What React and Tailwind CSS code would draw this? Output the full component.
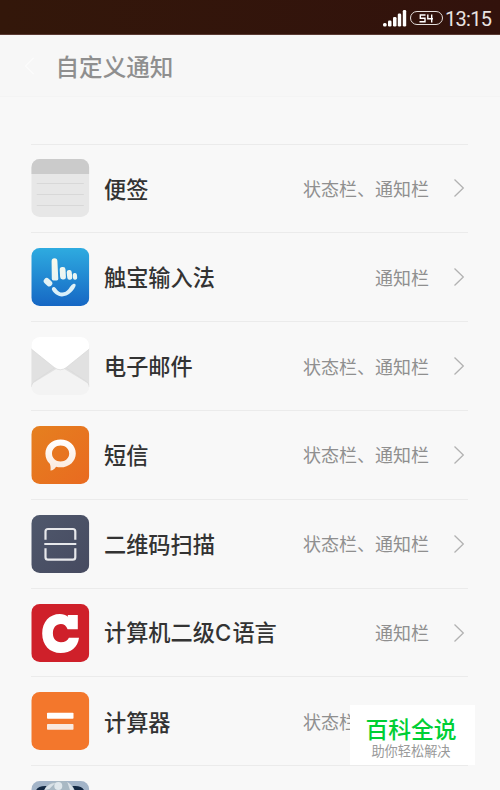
import React from "react";

const both = "状态栏、通知栏";
const single = "通知栏";

function NotesIcon() {
  return (
    <g>
      <rect width="58" height="58" fill="#e7e7e7" />
      <rect width="58" height="15" fill="#cbcbcb" />
      <path d="M5.5 24.5h47M5.5 35.5h47M5.5 46.5h47" stroke="#d8d8d8" strokeWidth="1" />
    </g>
  );
}

function TouchPalIcon() {
  return (
    <g>
      <rect width="58" height="58" fill="url(#touch)" />
      <g fill="url(#finger)">
        <path d="M20.3 13.2a2.9 2.9 0 0 1 5.8 0l.9 17.5a1.6 1.6 0 0 1-1.6 1.7h-3.3a1.6 1.6 0 0 1-1.6-1.6z" />
        <rect x="28.6" y="19" width="5.8" height="12.6" rx="2.6" transform="rotate(-3 31 25)" />
        <rect x="35.7" y="22" width="5" height="9.8" rx="2.3" transform="rotate(-6 38 27)" />
        <rect x="41.5" y="25" width="4.2" height="6.8" rx="2" transform="rotate(-6 43.5 28)" />
        <rect x="12" y="31.2" width="9.4" height="6" rx="2.9" transform="rotate(42 16.7 34.2)" />
        <path d="M20.7 40.2c1-2 3-1.200 4.200.5 3.500 5.300 8.600 5 12.400.3 1.500-1.900 2.200-4 4.500-5 2-.8 3.200.4 2.200 2.600-2.500 5.100-7.100 9.800-13.300 9.800-4.800 0-8.300-3.300-9.900-6.300-.3-.7-.4-1.300-.1-1.900z" />
      </g>
    </g>
  );
}

function MailIcon() {
  return (
    <g>
      <rect width="58" height="58" fill="#f3f3f3" />
      <path d="M0 11L25 32 2 46Q0 48 0 52zM58 11L33 32 56 46Q58 48 58 52z" fill="#e1e1e1" />
      <path d="M0 0h58v12L35 30.500Q29 35 23 30.500L0 12z" fill="#ffffff" />
      <path d="M0 12L23 30.500Q29 35 35 30.500L58 12" fill="none" stroke="#d7d7d7" strokeWidth=".7" />
      <path d="M0 50Q0 46 3 44.500L23 31M58 50Q58 46 55 44.500L35 31" fill="none" stroke="#d9d9d9" strokeWidth=".6" />
    </g>
  );
}

function MessageIcon() {
  return (
    <g>
      <rect width="58" height="58" fill="url(#message)" />
      <path
        fillRule="evenodd"
        fill="url(#finger2)"
        d="M29.300 13.500c8.500 0 15.200 6 15.200 13.900s-6.700 13.900-15.200 13.900c-1.600 0-3.200-.2-4.600-.6-1.100 2-3 3.500-5.300 3.900-.3-.1-.3-.4-.2-.7.300-2.200 0-4.200-.7-6.100-2.800-2.600-4.400-6.200-4.400-10.400 0-7.900 6.700-14 15.200-14zm0 5.900c-4.800 0-8.600 3.500-8.600 8s3.800 8 8.600 8 8.600-3.500 8.600-8-3.800-8-8.600-8z"
      />
    </g>
  );
}

function ScanIcon() {
  return (
    <g>
      <rect width="58" height="58" fill="url(#scan)" />
      <path
        d="M14.200 24.800V16.500q0-2.500 2.500-2.500h24.800q2.500 0 2.500 2.500v8.300M14.200 33.200v9q0 2.500 2.500 2.500h24.800q2.500 0 2.500-2.500v-9M13 29h32"
        fill="none"
        stroke="#e7e8eb"
        strokeWidth="2.200"
      />
    </g>
  );
}

function CLanguageIcon() {
  return (
    <g>
      <rect width="58" height="58" fill="#cf202a" />
      <path
        d="M46.500 11v14.300H36.300C35 21.600 32.700 19.900 29.600 19.900c-5 0-8 3.800-8 9.300 0 5.300 3.100 9 8 9 4.200 0 7-1.800 8-4.500h10.100C46.500 43.300 39.600 49 29.300 49 18.500 49 10.900 41.200 10.900 29.500S18.300 10 28.500 10c3.500 0 6 .9 8 2.800V11z"
        fill="#fff"
      />
    </g>
  );
}

function CalculatorIcon() {
  return (
    <g>
      <rect width="58" height="58" fill="#f3772c" />
      <rect x="15.700" y="20.800" width="26.500" height="5.900" rx=".8" fill="#fff" />
      <rect x="15.700" y="31.900" width="26.500" height="5.900" rx=".8" fill="#f9e9e0" />
    </g>
  );
}

function RobotIcon() {
  return (
    <g>
      <rect width="58" height="58" fill="#a3b4c8" />
      <path d="M4 13Q4 5 14 5h30Q53 5 54 13v20H4z" fill="#142943" />
      <path d="M12 14C13 4 19 0 27 0h6c7 1 10 7 12 14z" fill="#a9b9c4" />
      <circle cx="27" cy="5" r="4" fill="#dfe7ec" />
      <path d="M13 9Q17 2 24 2l-6 6zM36 1q5 3 7 9h-4z" fill="#d9e1e7" />
    </g>
  );
}

const rows = [
  { name: "便签", value: both, Icon: NotesIcon },
  { name: "触宝输入法", value: single, Icon: TouchPalIcon },
  { name: "电子邮件", value: both, Icon: MailIcon },
  { name: "短信", value: both, Icon: MessageIcon },
  { name: "二维码扫描", value: both, Icon: ScanIcon },
  {
    name: (
      <>
        计算机二级<span className="tracking-[1.200px] font-['Inter',sans-serif]">C</span>语言
      </>
    ),
    value: single,
    Icon: CLanguageIcon,
  },
  { name: "计算器", value: both, Icon: CalculatorIcon },
  { name: "", value: "", Icon: RobotIcon },
];

function Definitions() {
  return (
    <svg className="absolute h-0 w-0" aria-hidden="true">
      <defs>
        <clipPath id="tile">
          <rect width="58" height="58" rx="8.500" />
        </clipPath>
        <linearGradient id="touch" x2="0" y2="1">
          <stop stopColor="#2eabe0" />
          <stop offset="1" stopColor="#1667c4" />
        </linearGradient>
        <linearGradient id="finger" gradientUnits="userSpaceOnUse" x1="0" y1="10" x2="0" y2="48">
          <stop stopColor="#fbfaea" />
          <stop offset="1" stopColor="#d6effb" />
        </linearGradient>
        <linearGradient id="finger2" x2="0" y2="1">
          <stop stopColor="#ffffff" />
          <stop offset="1" stopColor="#fae9dc" />
        </linearGradient>
        <linearGradient id="message" x2="1" y2="1">
          <stop stopColor="#e5801f" />
          <stop offset="1" stopColor="#e96a20" />
        </linearGradient>
        <linearGradient id="scan" x2="1" y2="1">
          <stop stopColor="#4f586c" />
          <stop offset="1" stopColor="#464a60" />
        </linearGradient>
      </defs>
    </svg>
  );
}

function StatusBar() {
  return (
    <header className="flex h-[35px] shrink-0 items-center justify-end border-b border-[#5a3a33] bg-linear-to-r from-[#33170a] to-[#32120c] pr-[8px] text-[#e9e3e0]">
      <svg width="24" height="18" viewBox="0 0 24 18" className="mt-[3px]" fill="#fff">
        <rect x="0" y="13" width="3.700" height="3.500" rx="1.500" />
        <rect x="5" y="10.500" width="3.500" height="6" rx="1.300" />
        <rect x="10" y="7" width="3.500" height="9.500" rx="1.300" />
        <rect x="14.800" y="3.500" width="3.400" height="13" rx="1.300" />
        <rect x="19.800" y="0" width="3.400" height="16.500" rx="1.300" />
      </svg>
      <div className="mt-[2px] ml-[3px] flex h-[14px] w-[33px] items-center justify-center rounded-full border-[1.500px] border-[#e5dfdc]">
        <svg width="15" height="9" viewBox="0 0 15 9" fill="none" stroke="#fff" strokeWidth="1.400">
          <path d="M6.500 1H1.300v3.300h4.700v3.400H.5M8.800.5v4.300H14M12.700.5v8" />
        </svg>
      </div>
      <span className="mt-[4px] ml-[2px] w-[47px] text-[20px] leading-none tracking-[-0.700px] whitespace-nowrap font-['Roboto','Liberation_Sans',sans-serif]">
        13:15
      </span>
    </header>
  );
}

function Row({ name, value, Icon }) {
  return (
    <li className="flex h-[88.830px] shrink-0 items-center border-t border-[#ebebeb]">
      <svg width="58.500" height="58" viewBox="-.3 0 58.500 58" className="shrink-0">
        <g clipPath="url(#tile)">
          <Icon />
        </g>
      </svg>
      <span className="mb-[1.500px] ml-[14.500px] text-[22.200px] leading-none font-medium whitespace-nowrap text-[#333]">{name}</span>
      {value && (
        <>
          <span className="mb-[1px] ml-auto text-[18px] leading-none whitespace-nowrap text-[#8f8f8f]">{value}</span>
          <svg width="12" height="20" viewBox="0 0 12 20" className="ml-[24px] mr-[3px]" fill="none" stroke="#b2b2b2" strokeWidth="1.300">
            <path d="M1.500 1.500L10.300 10 1.500 18.500" />
          </svg>
        </>
      )}
    </li>
  );
}

export default function App() {
  return (
    <div className="relative flex h-[790px] w-[500px] flex-col overflow-hidden bg-[#f8f8f8] font-['Noto_Sans_CJK_SC',sans-serif]">
      <Definitions />
      <StatusBar />
      <div className="flex h-[62px] shrink-0 items-center border-b border-[#f4f4f4] bg-[#f7f7f7] pl-[24px]">
        <svg width="11" height="18" viewBox="0 0 11 18" fill="none" stroke="#fcfcfc" strokeWidth="1.200">
          <path d="M9.500 1L1.500 9l8 8" />
        </svg>
        <h1 className="mt-[2px] ml-[20.500px] text-[23.600px] leading-none font-medium text-[#8f8f8f]">自定义通知</h1>
      </div>
      <ul className="mt-[46.500px] flex flex-col pr-[32px] pl-[31px]">
        {rows.map((row, index) => (
          <Row key={index} {...row} />
        ))}
      </ul>
      <aside className="absolute top-[705px] left-[350px] flex h-[60px] w-[125px] flex-col items-center bg-white pt-[12px] pr-[3px]">
        <strong className="text-[22.800px] leading-[23px] font-medium text-[#00cf35]">百科全说</strong>
        <span className="mt-[4px] text-[13.200px] leading-[13px] text-[#999]">助你轻松解决</span>
      </aside>
    </div>
  );
}
